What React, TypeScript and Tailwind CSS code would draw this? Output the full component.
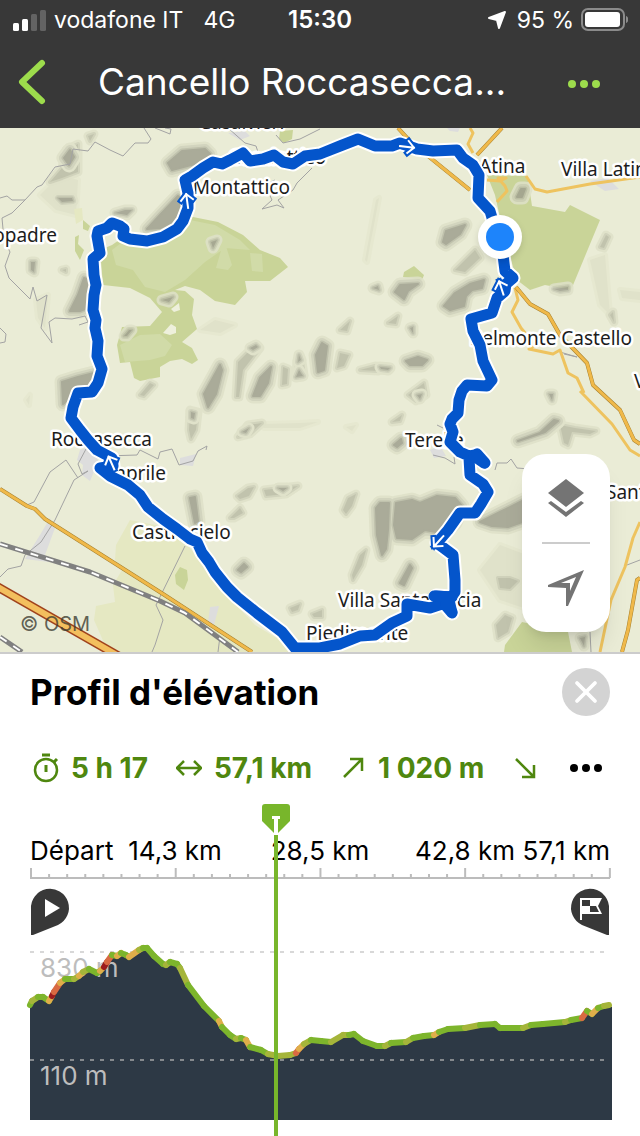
import React from 'react';
import { X } from 'lucide-react';

type Point = [number, number];

const ROUTE =
  'M320 154L305 156L293 164L283 162L274 155L263 159L250 161L243 153L230 160L222 164L213 162L203 168L192 176L185 180L188 193L188 208L183 221L177 229L163 237L147 241L130 239L123 236L124 229L120 226L112 223L107 228L98 231L97 236L100 253L93 259L94 275L96 285L94 295L93 310L96 320L95 328L98 341L97 356L102 369L98 383L92 392L78 393L73 407L71 418L80 430L88 440L97 450L112 458L113 466L100 468L110 476L128 485L140 495L148 507L163 519L177 529L190 539L197 542L202 553L209 562L215 572L227 587L237 597L257 613L282 632L295 648L308 648L320 648L340 644L360 636L375 635L392 623L407 616L407 604L430 608L442 604L436 596L452 597L442 602L446 606L452 613L449 600L455 592L455 580L453 555L437 543L448 530L460 513L475 513L481 504L488 492L483 484L470 475L469 458L477 454L485 463L475 455L469 456L460 452L450 442L453 432L450 424L452 419L458 413L459 400L462 391L467 385L487 386L492 380L483 361L480 345L473 331L471 319L492 313L497 298L505 291L506 284L513 278L505 271L503 255L490 211L478 198L479 175L473 165L463 158L457 150L433 151L417 149L400 143L392 146L375 146L358 139L340 146Z';

const WOODS = [
  'M100 250L112 245L125 236L145 240L165 238L178 231L188 216L218 222L243 235L260 250L280 258L288 267L270 281L245 281L247 292L235 305L215 301L200 290L185 286L175 290L185 291L194 299L192 315L197 329L182 342L192 348L198 360L192 364L182 359L170 361L160 367L160 377L140 381L134 378L130 362L120 363L117 345L122 327L150 326L162 312L150 298L130 288L103 285Z',
  'M487 175L527 176L529 186L532 206L565 212L570 205L600 220L571 290L545 285L530 290L517 280L505 240L495 195Z',
  'M404 272L414 266L424 275L422 280L403 277Z',
  'M75 237L79 235L78 244L84 250L80 260L75 251Z',
  'M83 220L90 226L88 231L83 229Z',
  'M280 131L293 130L292 139L284 143L279 139Z',
  'M175 575L180 567L187 570L188 580L184 590L176 584Z',
  'M505 645L522 622L568 632L572 652L504 652Z',
];

const GLADES = ['M171 309L179 303L180 310L174 312Z', 'M163 333L171 324L176 327L176 333L170 335Z'];

const WOOD_LIGHT = [
  'M112 250L125 240L150 242L178 233L190 220L215 225L240 240L250 250L225 248L205 262L185 280L165 292L145 287L133 270L116 265Z',
  'M120 345L140 335L160 334L172 345L165 356L150 360L125 362Z',
  'M216 268L224 240L232 265L228 270Z',
  'M250 253L262 254L263 272L252 271Z',
];

const FARMLAND = [
  'M116 545L130 520L165 527L185 542L200 560L222 590L255 625L280 640L290 652L108 652L94 620L96 606L115 602L113 585L122 570L115 560Z',
  'M74 209L82 208L83 220L76 224Z',
];

const TOWNS = [
  'M80 450L95 446L98 462L90 481L82 475L83 465L77 460Z',
  'M50 518L55 528L45 555L49 562L25 559L40 535Z',
  'M210 607L219 606L214 625L208 623Z',
  'M180 458L196 454L193 466L180 465Z',
  'M590 181L608 178L619 189L605 191Z',
  'M228 133L245 131L250 136L240 140Z',
  'M430 450L440 446L446 456L434 458Z',
  'M447 128L460 128L458 132L450 131Z',
];

const HILLS = [
  'M168 163L182 151L205 149L210 154L195 164L172 170Z',
  'M147 229L160 215L178 196L186 203L178 220L160 228Z',
  'M64 158L70 150L74 157L69 165Z',
  'M70 311L78 295L84 278L90 280L90 307L80 311Z',
  'M62 382L78 377L94 373L92 390L74 395L63 404Z',
  'M204 394L220 365L222 370L216 394L208 407Z',
  'M253 396L260 378L271 367L268 383L260 396Z',
  'M316 355L322 343L327 346L324 370L318 372Z',
  'M406 361L418 357L427 360L422 365L410 365Z',
  'M394 445L401 439L402 443L397 447Z',
  'M190 498L195 497L198 521L195 523Z',
  'M238 570L244 564L247 567L241 572Z',
  'M376 508L380 503L389 503L388 530L386 549L382 555L377 535Z',
  'M396 503L412 500L420 503L437 496L455 498L462 506L455 523L442 533L425 530L412 539L397 538L394 525Z',
  'M480 522L500 512L528 498L528 520L508 527L492 526Z',
  'M400 583L410 565L412 568L404 585Z',
  'M444 306L455 293L470 284L484 280L482 288L472 290L466 296L464 306L450 310Z',
  'M443 242L446 231L465 225L460 234L446 244Z',
  'M395 292L400 285L418 284L408 291L404 299Z',
  'M517 197L521 189L525 189L522 197Z',
  'M518 441L540 433L554 420L558 421L545 432Z',
];

const SMALL_HILLS = [
  'M58 198L72 198L73 201L62 202Z',
  'M115 213L125 210L132 210L127 215Z',
  'M31 262L35 262L34 272L31 270Z',
  'M211 242L217 240L213 248Z',
  'M162 300L173 297L169 302Z',
  'M124 336L129 330L132 330L127 336Z',
  'M250 348L256 345L258 347L253 350Z',
  'M296 377L299 370L303 376Z',
  'M298 362L299 355L301 360Z',
  'M380 367L390 368L388 370L381 369Z',
  'M417 395L422 394L420 399Z',
  'M191 412L195 413L194 419L191 418Z',
  'M242 432L249 428L246 433Z',
  'M278 488L287 488L283 491Z',
  'M373 288L378 286L379 290Z',
  'M554 289L568 287L568 290L560 291Z',
  'M410 328L413 327L413 333Z',
  'M580 638L585 637L584 646Z',
  'M549 394L553 394L552 400Z',
  'M322 647L325 641L329 644Z',
];

const LOW_HILLS = [
  'M50 182L62 168L66 150L78 144L78 172L62 178Z',
  'M236 397L238 362L252 348L260 348L243 370L239 397Z',
  'M282 385L283 367L288 369L287 384Z',
  'M296 376L297 360L302 362L304 375Z',
  'M337 368L340 353L349 355L344 366Z',
  'M408 395L424 383L426 395L416 401Z',
  'M189 430L190 410L198 412L196 430L191 439Z',
  'M238 437L248 425L262 423L250 434Z',
  'M237 496L248 488L254 487L249 496L240 499Z',
  'M264 490L298 486L286 494L266 496Z',
  'M343 510L348 498L356 494L352 506L346 514Z',
  'M352 575L360 555L366 550L362 565L353 580Z',
  'M230 518L240 508L243 513L234 518Z',
  'M360 370L375 366L388 367L378 371Z',
  'M388 323L398 316L396 324Z',
  'M392 422L402 415L400 421Z',
  'M340 330L350 321L347 331Z',
  'M455 270L475 250L480 258L465 272Z',
  'M600 247L606 235L609 237L604 248Z',
  'M610 315L613 312L614 322Z',
  'M560 425L575 428L596 431L590 434L572 432L568 445L564 443Z',
  'M498 578L510 578L518 581L510 589L500 588Z',
  'M496 625L505 615L512 618L508 632L498 638Z',
  'M290 608L300 604L298 610L292 612Z',
  'M312 614L322 610L322 617L314 617Z',
  'M88 136L94 134L90 141Z',
  'M62 270L66 269L66 272Z',
  'M140 395L150 383L154 385L144 396Z',
];

const FAINT_HILLS = [
  'M376 200L379 198L374 225L371 240L367 262L365 260Z',
  'M200 330L215 320L235 325L220 333Z',
  'M262 424L300 423L318 422L300 428L264 428Z',
  'M590 260L605 255L610 315L600 305Z',
  'M620 290L640 292L640 300L622 298Z',
  'M36 300L48 295L45 328L38 318Z',
  'M26 400L30 395L29 405Z',
  'M346 427L356 425L352 431Z',
  'M40 195L60 175L78 180L76 215L56 210Z',
  'M480 570L500 545L540 560L560 620L500 600Z',
];

const PATHS = [
  'M0 198L7 196L12 200L25 200L37 187L42 185L55 167L70 164L73 149L88 151L95 142L110 150L123 156L135 143L148 143L151 139L144 128',
  'M25 200L12 213L2 218L4 240L10 252L5 266L9 278L30 299L33 287L37 301L47 295L41 328L52 343L49 322L55 318L72 319L85 316L88 322L79 325',
  'M0 328L6 334L5 342L0 343',
  'M155 128L170 134L171 129L165 128',
  'M275 180L265 185L272 200L262 209L277 205L284 208L278 200L293 190L297 183L312 168',
  'M228 128L245 143L256 146L258 152',
  'M276 135L283 143L300 139L320 129',
  'M105 456L137 455L140 450L158 459L160 452L172 449L179 465L193 461L198 451L207 446L206 450',
  'M86 449L78 464L82 474L88 471L74 480L55 520L41 542L25 555L21 566L8 569L0 577',
  'M78 478L66 460L50 472L34 502L27 505',
  'M185 546L157 603L156 605L163 620L155 645L152 652',
  'M220 636L218 652',
  'M437 425L443 428M433 455L445 458L455 464L454 457',
  'M495 470L497 463L507 463L511 459L517 468L530 469',
  'M560 352L577 357L564 354',
  'M627 565L640 560',
  'M590 632L591 652',
];

const YELLOW_ROADS = [
  'M470 128L473 133L468 144L473 153',
  'M487 180L500 181L506 178L498 178L505 186L507 191L497 202',
  'M526 176L535 189L547 192L590 184L640 177',
  'M515 288L518 300L512 312L521 328L535 345L529 349L553 354L560 350L568 373L577 378L584 393',
  'M580 391L612 424L630 450L640 456',
  'M640 522L633 538L625 567L611 600L600 652',
];

const MAIN_ROADS = [
  'M398 128L410 141L428 156L470 190',
  'M502 128L477 155',
  'M516 287L530 304L548 314L560 335L587 363L593 385L620 410L634 440L640 444',
  'M0 489L27 506L35 509L45 519L163 594L252 652',
  'M640 578L637 580L628 630L622 652',
];

const RAILWAYS = ['M0 544L90 572L160 601L185 613L238 652', 'M0 637L22 652'];

interface Place {
  name: string;
  x: number;
  y: number;
  anchor?: 'start' | 'end';
}

const PLACES: Place[] = [
  { name: 'Casalvieri', x: 199, y: 129 },
  { name: 'Casalattico', x: 326, y: 164, anchor: 'end' },
  { name: 'Montattico', x: 290, y: 194, anchor: 'end' },
  { name: 'opadre', x: 57, y: 242, anchor: 'end' },
  { name: 'Atina', x: 479, y: 173 },
  { name: 'Villa Latina', x: 561, y: 176 },
  { name: 'Belmonte Castello', x: 632, y: 345, anchor: 'end' },
  { name: 'V', x: 634, y: 388 },
  { name: 'Roccasecca', x: 51, y: 446 },
  { name: 'Caprile', x: 166, y: 480, anchor: 'end' },
  { name: 'Castrocielo', x: 132, y: 539 },
  { name: 'Terelle', x: 405, y: 447 },
  { name: "Sant'", x: 606, y: 499 },
  { name: 'Villa Santa Lucia', x: 338, y: 607 },
  { name: 'Piedimonte', x: 306, y: 640 },
];

const ARROWS = [
  { x: 187, y: 200, angle: -8 },
  { x: 408, y: 147, angle: 97 },
  { x: 501, y: 287, angle: -18 },
  { x: 438, y: 542, angle: 222 },
  { x: 111, y: 462, angle: -24 },
];

const G = '#7db52c';
const O = '#a5b53a';
const Y = '#dfae4a';
const R = '#d96a42';
const D = '#9c1c1e';

// each colour belongs to the stretch that starts at its point
const PROFILE: { at: Point; color: string }[] = [
  { at: [30, 1005], color: G },
  { at: [32, 1001], color: O },
  { at: [38, 997], color: G },
  { at: [43, 997], color: G },
  { at: [49, 1001], color: Y },
  { at: [52, 996], color: D },
  { at: [54, 992], color: R },
  { at: [60, 983], color: Y },
  { at: [65, 979], color: G },
  { at: [74, 979], color: O },
  { at: [79, 976], color: Y },
  { at: [83, 972], color: O },
  { at: [89, 969], color: G },
  { at: [97, 973], color: G },
  { at: [100, 971], color: Y },
  { at: [104, 967], color: D },
  { at: [107, 962], color: R },
  { at: [112, 955], color: G },
  { at: [117, 956], color: Y },
  { at: [121, 953], color: G },
  { at: [126, 955], color: G },
  { at: [129, 957], color: Y },
  { at: [139, 950], color: O },
  { at: [143, 948], color: G },
  { at: [147, 948], color: G },
  { at: [154, 956], color: G },
  { at: [163, 964], color: G },
  { at: [166, 965], color: O },
  { at: [170, 962], color: G },
  { at: [177, 964], color: G },
  { at: [180, 968], color: O },
  { at: [188, 985], color: G },
  { at: [204, 1006], color: G },
  { at: [219, 1021], color: Y },
  { at: [222, 1027], color: G },
  { at: [230, 1035], color: G },
  { at: [236, 1039], color: O },
  { at: [241, 1038], color: G },
  { at: [246, 1040], color: Y },
  { at: [250, 1047], color: G },
  { at: [261, 1050], color: G },
  { at: [268, 1054], color: O },
  { at: [278, 1056], color: O },
  { at: [290, 1055], color: O },
  { at: [296, 1053], color: R },
  { at: [299, 1049], color: Y },
  { at: [304, 1044], color: O },
  { at: [311, 1040], color: G },
  { at: [321, 1041], color: G },
  { at: [331, 1042], color: O },
  { at: [343, 1035], color: O },
  { at: [349, 1035], color: G },
  { at: [354, 1034], color: G },
  { at: [363, 1041], color: G },
  { at: [377, 1046], color: G },
  { at: [385, 1046], color: O },
  { at: [391, 1043], color: G },
  { at: [406, 1042], color: O },
  { at: [413, 1038], color: G },
  { at: [424, 1036], color: G },
  { at: [434, 1035], color: Y },
  { at: [439, 1032], color: G },
  { at: [448, 1029], color: G },
  { at: [465, 1028], color: O },
  { at: [480, 1025], color: G },
  { at: [495, 1024], color: G },
  { at: [500, 1028], color: G },
  { at: [508, 1028], color: G },
  { at: [523, 1028], color: O },
  { at: [531, 1025], color: G },
  { at: [543, 1024], color: G },
  { at: [565, 1022], color: O },
  { at: [571, 1020], color: G },
  { at: [582, 1018], color: R },
  { at: [587, 1011], color: G },
  { at: [592, 1014], color: Y },
  { at: [598, 1008], color: G },
  { at: [604, 1006], color: O },
  { at: [609, 1005], color: G },
];

const profileLine = PROFILE.map((p) => p.at.join(' ')).join('L');

const Lines: React.FC<{ paths: string[]; color: string; width: number; dash?: string }> = ({ paths, color, width, dash }) => (
  <path d={paths.join('')} fill="none" stroke={color} strokeWidth={width} strokeDasharray={dash} strokeLinejoin="round" />
);

const Slopes: React.FC<{ paths: string[]; layers: [number, string][] }> = ({ paths, layers }) => (
  <>
    {layers.map(([width, color]) => (
      <path key={width} d={paths.join('')} fill={color} stroke={color} strokeWidth={width} strokeLinejoin="round" />
    ))}
  </>
);

const StatusBar = () => (
  <div className="flex h-10 items-center justify-between px-3 text-[23px] leading-none text-white">
    <div className="flex flex-1 items-center gap-2">
      <svg width="34" height="22" viewBox="0 0 34 22" aria-hidden="true">
        <rect x="1" y="14" width="6" height="8" rx="1.5" fill="#fff" />
        <rect x="10" y="10" width="6" height="12" rx="1.5" fill="#fff" />
        <rect x="19" y="5" width="6" height="17" rx="1.5" fill="#636363" />
        <rect x="28" y="1" width="6" height="21" rx="1.5" fill="#636363" />
      </svg>
      <span>vodafone IT</span>
      <span className="pl-3">4G</span>
    </div>
    <span className="text-2xl font-semibold leading-none">15:30</span>
    <div className="flex flex-1 items-center justify-end gap-1.5">
      <svg width="24" height="20" viewBox="0 0 24 20" aria-hidden="true">
        <path d="M18 2L12 18L10 10L2 8Z" fill="#fff" stroke="#fff" strokeWidth="2" strokeLinejoin="round" />
      </svg>
      <span>95 %</span>
      <svg width="48" height="24" viewBox="0 0 48 24" aria-hidden="true">
        <rect x="2" y="1" width="42" height="21" rx="6" fill="none" stroke="#8b8b8b" strokeWidth="2" />
        <rect x="5" y="4" width="35" height="15" rx="3" fill="#fff" />
        <path d="M46 8C49 9 49 14 46 15Z" fill="#8b8b8b" />
      </svg>
    </div>
  </div>
);

const Dots: React.FC<{ className?: string }> = ({ className }) => (
  <svg width="32" height="8" viewBox="0 0 32 8" fill="currentColor" className={className} aria-hidden="true">
    <circle cx="4" cy="4" r="4" />
    <circle cx="16" cy="4" r="4" />
    <circle cx="28" cy="4" r="4" />
  </svg>
);

const NavBar = () => (
  <div className="flex h-[88px] items-center">
    <button aria-label="Retour" className="flex w-16 shrink-0 justify-center pb-1 text-[#9ddc4c]">
      <svg width="30" height="48" viewBox="0 0 30 48" fill="none" aria-hidden="true">
        <path d="M25 5L5 24L25 43" stroke="currentColor" strokeWidth="6" strokeLinecap="round" strokeLinejoin="round" />
      </svg>
    </button>
    <h1 className="min-w-0 flex-1 truncate pb-1 text-center text-[37px] leading-[52px] text-white">Cancello Roccasecca...</h1>
    <button aria-label="Plus d'options" className="mr-10 flex h-12 shrink-0 items-center pl-7 text-[#9ddc4c]">
      <Dots />
    </button>
  </div>
);

const RouteMap = () => (
  <svg viewBox="0 128 640 524" className="block w-full bg-[#eaecd6]" role="img" aria-label="Carte du parcours">
    <Slopes paths={FAINT_HILLS} layers={[[6, '#e6e8d0'], [0, '#e0e2ca']]} />
    <path d={FARMLAND.join('')} fill="#e5e8c2" />
    <path d={WOODS.join('')} fill="#c9d498" />
    <path d={WOOD_LIGHT.join('')} fill="#d1dba8" />
    <path d={GLADES.join('')} fill="#eef0dc" />
    <g opacity="0.85">
      <Slopes paths={LOW_HILLS} layers={[[9, '#dfe1c9'], [4, '#cdcfb8'], [0, '#bbbda7']]} />
      <Slopes paths={SMALL_HILLS} layers={[[11, '#dfe1c9'], [6, '#ced0ba'], [3, '#b9bba6'], [0, '#9fa08f']]} />
      <Slopes paths={HILLS} layers={[[15, '#dfe1c9'], [10, '#ced0ba'], [5, '#b9bba6'], [2, '#9fa08f']]} />
    </g>
    <path d={TOWNS.join('')} fill="#dddddd" />
    <Lines paths={PATHS} color="#a3a3a3" width={1} />
    <Lines paths={YELLOW_ROADS} color="#eec35f" width={3} />
    <Lines paths={MAIN_ROADS} color="#a58130" width={4} />
    <Lines paths={MAIN_ROADS} color="#f0b94a" width={3} />
    <Lines paths={RAILWAYS} color="#808080" width={5} />
    <Lines paths={RAILWAYS} color="#ffffff" width={2} dash="8 8" />
    <path d="M-4 586L122 658" stroke="#a0421c" strokeWidth="9" />
    <path d="M-4 586L122 658" stroke="#f3bf5e" strokeWidth="6" />

    <g className="font-['Noto_Sans',sans-serif]" fontSize="19" fill="#1c1c1c" stroke="#fff" strokeWidth="5" strokeLinejoin="round" paintOrder="stroke">
      {PLACES.map((place) => (
        <text key={place.name} x={place.x} y={place.y} textAnchor={place.anchor}>
          {place.name}
        </text>
      ))}
    </g>

    <path d={ROUTE} fill="none" stroke="#fff" strokeWidth="15" strokeLinejoin="round" />
    <path d="M477 456L484 463M446 604L452 612" stroke="#fff" strokeWidth="15" strokeLinecap="round" />
    <path d={ROUTE} fill="none" stroke="#0455cb" strokeWidth="11" strokeLinejoin="round" />
    <path d="M474 456L484 463M446 604L452 612M434 596L452 597" stroke="#0455cb" strokeWidth="11" strokeLinecap="round" />
    {ARROWS.map((a) => (
      <g key={a.x} transform={`translate(${a.x} ${a.y}) rotate(${a.angle})`} fill="none" strokeLinecap="square">
        <path d="M0 8V-6M-6 0L0 -6L6 0" stroke="#0455cb" strokeWidth="6" />
        <path d="M0 8V-6M-6 0L0 -6L6 0" stroke="#fff" strokeWidth="2" />
      </g>
    ))}

    <g className="drop-shadow-md">
      <circle cx="500" cy="237" r="22" fill="#fff" />
      <circle cx="500" cy="237" r="14" fill="#1d84fb" />
    </g>
    <text x="20" y="631" fontSize="20" fill="#3c3c32" fillOpacity="0.8">
      © OSM
    </text>
  </svg>
);

const MapControls = () => (
  <div className="absolute bottom-5 right-[30px] flex w-[88px] flex-col items-center rounded-3xl bg-white shadow-xl">
    <button aria-label="Calques" className="flex h-[88px] w-full items-center justify-center text-[#747474]">
      <svg width="36" height="38" viewBox="0 0 36 38" fill="currentColor" aria-hidden="true">
        <path d="M18 0L36 14L18 28L0 14Z" />
        <path d="M0 24L3 22L18 33L33 22L36 24L18 38Z" />
      </svg>
    </button>
    <div className="h-0.5 w-12 bg-[#cccccc]" />
    <button aria-label="Me localiser" className="flex h-[88px] w-full items-center justify-center text-[#747474]">
      <svg width="36" height="36" viewBox="0 0 36 36" fill="currentColor" fillRule="evenodd" aria-hidden="true">
        <path d="M36 0L20 36H18V18L0 17V15ZM13 13L22 13V21L28 7Z" />
      </svg>
    </button>
  </div>
);

const Stat: React.FC<{ label: string; value?: string; children: React.ReactNode }> = ({ label, value, children }) => (
  <li className="flex shrink-0 items-center gap-3" aria-label={label}>
    <svg width="26" height="30" viewBox="0 0 26 30" fill="none" stroke="currentColor" strokeWidth="2.5" aria-hidden="true">
      {children}
    </svg>
    {value && <span>{value}</span>}
  </li>
);

const Stats = () => (
  <div className="mt-8 flex h-10 items-center justify-between">
    <ul className="flex min-w-0 items-center gap-7 overflow-hidden pl-[3px] text-[28px] font-bold text-[#4f870f]">
      <Stat label="Durée" value="5 h 17">
        <circle cx="13" cy="17" r="11" />
        <path d="M9 2H17M13 12V19M21 9L24 6" strokeWidth="3" />
      </Stat>
      <Stat label="Distance" value="57,1 km">
        <path d="M1 15H25M8 8L1 15L8 22M18 8L25 15L18 22" strokeLinejoin="round" />
      </Stat>
      <Stat label="Dénivelé positif" value="1 020 m">
        <path d="M4 24L22 6M10 6H22V18" />
      </Stat>
      <Stat label="Dénivelé négatif">
        <path d="M4 6L22 24M10 24H22V12" />
      </Stat>
    </ul>
    <button aria-label="Plus de statistiques" className="mr-2 flex h-10 shrink-0 items-center text-black">
      <Dots />
    </button>
  </div>
);

const ElevationChart = () => (
  <svg viewBox="30 868 580 252" className="block w-full overflow-visible" role="img" aria-label="Profil d'élévation">
    <path d="M30 878H610" stroke="#bcbcbc" strokeWidth="2" />
    {Array.from({ length: 33 }, (_, i) => (
      <path key={i} d={`M${31 + i * 18.09} ${i % 8 === 0 ? 868 : 874}V878`} stroke="#bcbcbc" strokeWidth="2" />
    ))}

    <path d="M31 935V909A19 19 0 1 1 58 925L33 935Z" fill="#383838" />
    <path d="M45 899L60 908L45 917Z" fill="#fff" />
    <path d="M609 935V909A19 19 0 1 0 582 925L607 935Z" fill="#383838" />
    <path d="M580 898H602L598 906L602 914H582V920H580Z" fill="#fff" />
    <path d="M582 900H590V906H582ZM590 906H596L599 912H590Z" fill="#383838" />

    <path d="M30 952H606" stroke="#d8d8d8" strokeWidth="2" strokeDasharray="4 6" />
    <path d={`M${profileLine}L612 1007V1120H30Z`} fill="#2d3945" />
    <text x="40" y="977" fontSize="26" fill="#bdbdbd">830 m</text>
    {PROFILE.slice(1).map((p, i) => (
      <path
        key={i}
        d={`M${PROFILE[i].at.join(' ')}L${p.at.join(' ')}`}
        stroke={PROFILE[i].color}
        strokeWidth="6"
        strokeLinecap="round"
      />
    ))}
    <path d="M30 1060H606" stroke="#85898d" strokeWidth="2" strokeDasharray="4 6" />
    <text x="40" y="1085" fontSize="26" fill="#bdbdbd">110 m</text>
  </svg>
);

const ElevationPanel = () => (
  <section className="border-t-2 border-[#cccccc] bg-white px-[30px] pt-3.5">
    <div className="flex h-12 items-center justify-between">
      <h2 className="text-[35px] font-bold leading-none text-black">Profil d'élévation</h2>
      <button aria-label="Fermer" className="flex size-12 items-center justify-center rounded-full bg-[#d3d3d3] text-white">
        <X size={36} strokeWidth={2.5} />
      </button>
    </div>

    <Stats />

    <div className="relative mt-4 pb-4 pt-[30px]">
      <div className="grid h-[34px] grid-cols-8 items-center whitespace-nowrap text-[26px] leading-none text-black">
        <span>Départ</span>
        <span className="col-span-2 text-center">14,3 km</span>
        <span className="col-span-2 text-center">28,5 km</span>
        <span className="col-span-2 text-center">42,8 km</span>
        <span className="flex justify-end">57,1 km</span>
      </div>
      <ElevationChart />
      <div className="absolute inset-y-0 left-[42.4%] flex w-7 -translate-x-1/2 flex-col items-center">
        <svg width="28" height="31" viewBox="0 0 28 31" className="shrink-0" aria-hidden="true">
          <path d="M3 0H25Q28 0 28 3V17L14 31L0 17V3Q0 0 3 0Z" fill="#78b62b" />
          <path d="M10 12H18V15H16V31H12V15H10Z" fill="#fff" />
        </svg>
        <div className="w-1 flex-1 bg-[#78b62b]" />
      </div>
    </div>
  </section>
);

export default function App() {
  return (
    <main className="w-full bg-white font-['Inter',sans-serif]">
      <header className="bg-[#383838]">
        <StatusBar />
        <NavBar />
      </header>
      <div className="relative overflow-hidden">
        <RouteMap />
        <MapControls />
      </div>
      <ElevationPanel />
    </main>
  );
}
